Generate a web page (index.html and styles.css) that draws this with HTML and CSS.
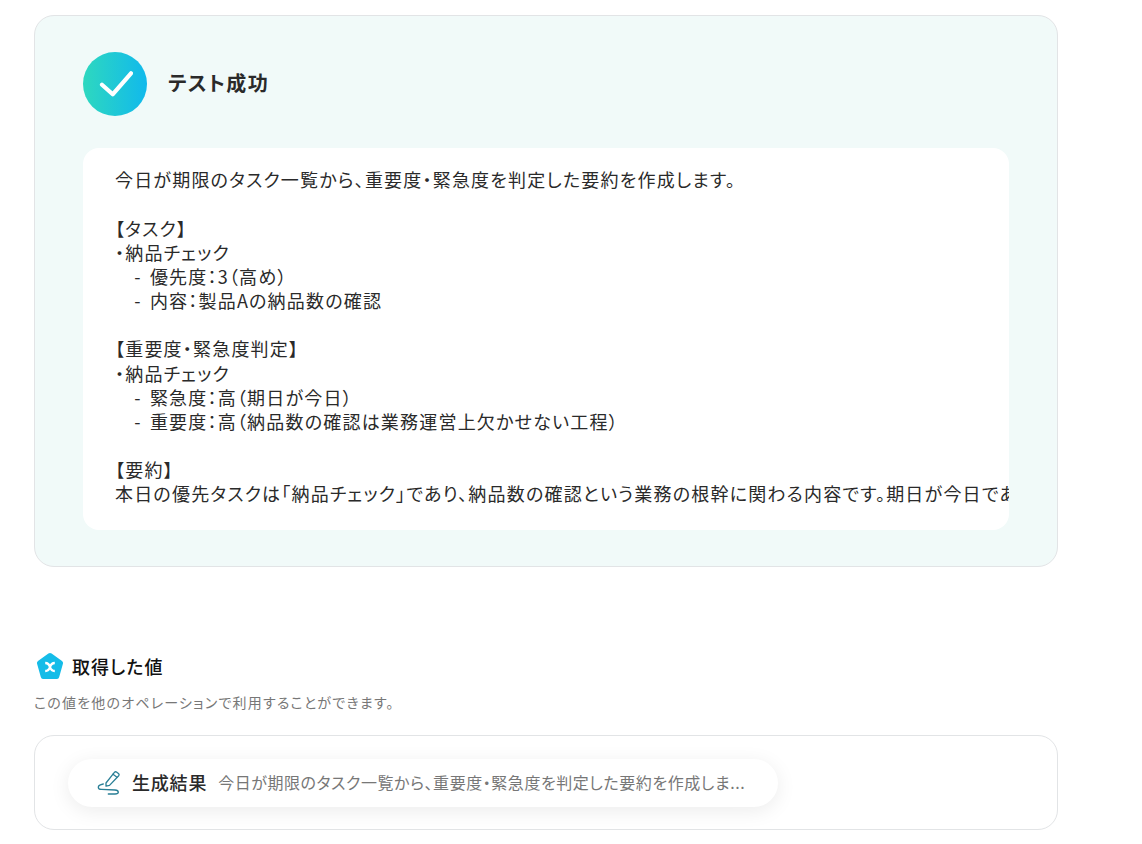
FILE: index.html
```html
<!DOCTYPE html>
<html lang="ja">
<head>
    <meta charset="UTF-8">
    <title>テスト成功</title>
    <link rel="stylesheet" href="styles.css">
</head>
<body>
    <div class="page">
        <section class="result-card">
            <div class="result-head">
                <span class="check-badge">
                    <svg width="36" height="30" viewBox="0 0 36 30" fill="none">
                        <path d="M5 15.7 L15.7 25.3 L34 4.3" stroke="#fff" stroke-width="4.2" stroke-linecap="round" stroke-linejoin="round"/>
                    </svg>
                </span>
                <span class="result-title">テスト成功</span>
            </div>
            <pre class="result-body">今日が期限のタスク一覧から、重要度・緊急度を判定した要約を作成します。

【タスク】
・納品チェック
　- 優先度：3（高め）
　- 内容：製品Aの納品数の確認

【重要度・緊急度判定】
・納品チェック
　- 緊急度：高（期日が今日）
　- 重要度：高（納品数の確認は業務運営上欠かせない工程）

【要約】
本日の優先タスクは「納品チェック」であり、納品数の確認という業務の根幹に関わる内容です。期日が今日であるため、早急な対応が求められます。</pre>
        </section>

        <section class="values">
            <h2 class="values-title">
                <svg width="28" height="28" viewBox="0 0 28 28">
                    <path d="M12.4 1.6 Q14 .6 15.6 1.6 L26 9 Q27.4 10 27 11.6 L23.2 25 Q22.7 27 21 27 L7 27 Q5.3 27 4.8 25 L1 11.6 Q.6 10 2 9 Z" fill="#15bce8"/>
                    <path d="M9.2 11 Q12.8 11 14 15 Q15.2 19 18.8 19 M18.8 11 Q15.2 11 14 15 Q12.8 19 9.2 19" fill="none" stroke="#fff" stroke-width="2.4"/>
                </svg>
                取得した値
            </h2>
            <p class="values-note">この値を他のオペレーションで利用することができます。</p>
            <div class="values-box">
                <div class="value-pill">
                    <svg class="pen-icon" width="24" height="26" viewBox="0 0 24 26" fill="none" stroke="#2a7f96" stroke-width="1.3" stroke-linecap="round" stroke-linejoin="round">
                        <path d="M10 13 L18.4 2.4 Q19.4 1.2 20.8 2.2 L22.4 3.4 Q23.6 4.4 22.7 5.7 L13.5 15.4 L10 16.2 Z"/>
                        <path d="M17 4.2 L21 7.2"/>
                        <path d="M7.3 14 Q2.3 15 2.3 17.2 Q2.3 19.4 5.7 19.4 L19 20 Q22.3 20.2 22.3 22.2 Q22.3 24 19 24 L12.3 24"/>
                    </svg>
                    <span class="value-name">生成結果</span>
                    <span class="value-text">今日が期限のタスク一覧から、重要度・緊急度を判定した要約を作成しま...</span>
                </div>
            </div>
        </section>
    </div>
</body>
</html>
```

FILE: styles.css
```css
* {
    box-sizing: border-box;
}

html, body {
    height: 100%;
    overflow: hidden;
}

body {
    margin: 0;
    background-color: #fff;
    color: #2a2a2a;
    font-family: "Noto Sans CJK JP", "Noto Sans", sans-serif;
    font-feature-settings: "palt";
}

.page {
    width: 1024px;
    margin-left: 34px;
    padding-top: 15px;
}

.result-card {
    height: 552px;
    padding: 36px 48px;
    background-color: #f1faf9;
    border: 1px solid #e2e4e6;
    border-radius: 20px;
}

.result-head {
    display: flex;
    align-items: center;
    gap: 21px;
    margin-bottom: 32px;
}

.check-badge {
    display: flex;
    align-items: center;
    justify-content: center;
    width: 64px;
    height: 64px;
    border-radius: 50%;
    background: linear-gradient(90deg, #2ed8bf, #11b9ec);
}

.result-title {
    margin-top: -4px;
    font-size: 20px;
    font-weight: 700;
    letter-spacing: 1.4px;
}

.result-body {
    height: 382px;
    margin: 0;
    padding: 19.4px 32px 20px;
    overflow: hidden;
    background-color: #fff;
    border-radius: 16px;
    font-family: inherit;
    font-size: 18px;
    letter-spacing: 1.2px;
    word-spacing: 3px;
    line-height: 24.15px;
    white-space: pre;
}

.values {
    margin-top: 85px;
}

.values-title {
    display: flex;
    align-items: center;
    gap: 8px;
    margin: 0 0 0 2px;
    color: #111;
    font-size: 18px;
    font-weight: 500;
    letter-spacing: 1px;
    line-height: 28px;
}

.values-note {
    margin: 12px 0 0;
    color: #777;
    font-size: 14px;
    letter-spacing: 1.2px;
    line-height: 20px;
}

.values-box {
    height: 95px;
    margin-top: 23px;
    padding: 23px 33px;
    background-color: #fff;
    border: 1px solid #e2e4e6;
    border-radius: 20px;
}

.value-pill {
    display: inline-flex;
    align-items: center;
    width: 710px;
    height: 48px;
    padding-left: 28px;
    background-color: #fff;
    border-radius: 24px;
    box-shadow: 0 4px 20px rgba(0, 0, 0, 0.08);
}

.pen-icon {
    flex-shrink: 0;
    margin-right: 12px;
}

.value-name {
    margin-top: -3px;
    margin-right: 11px;
    font-size: 18px;
    font-weight: 500;
    letter-spacing: 0.8px;
}

.value-text {
    margin-top: -3px;
    color: #777;
    font-size: 16px;
    letter-spacing: 0.55px;
    white-space: nowrap;
}
```
